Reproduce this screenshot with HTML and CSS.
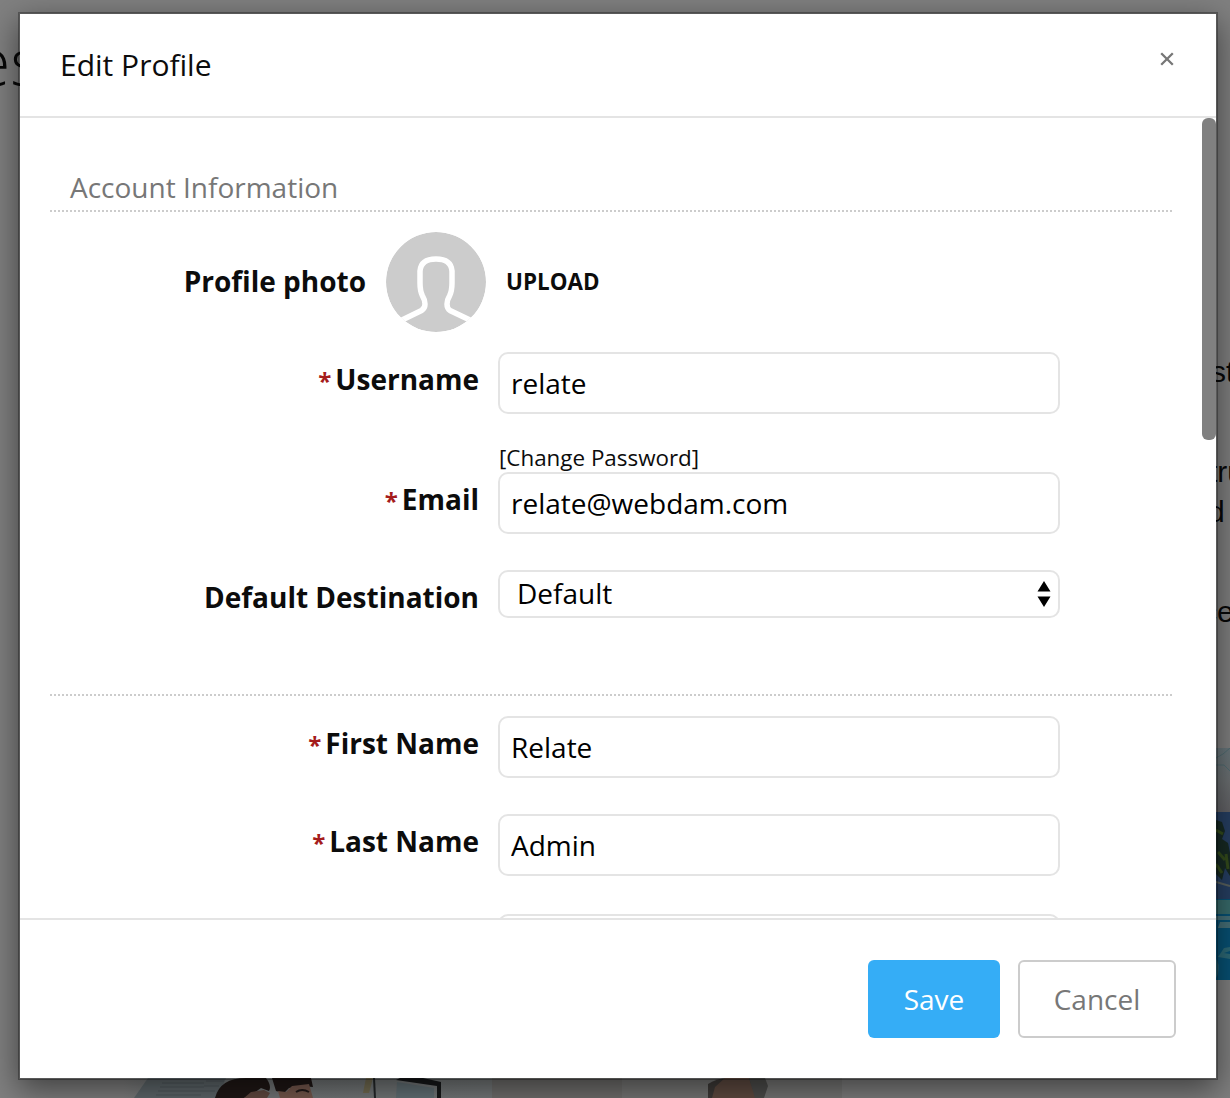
FILE: index.html
```html
<!DOCTYPE html>
<html lang="en">
<head>
<meta charset="utf-8">
<title>Edit Profile</title>
<link rel="stylesheet" href="styles.css">
</head>
<body>
<div class="backdrop" aria-hidden="true">
  <span class="page-title">es</span>
  <span class="page-text line-a">st</span>
  <span class="page-text line-b">tru</span>
  <span class="page-text line-c">d</span>
  <span class="page-text line-d">ce</span>
  <svg class="beach" width="14" height="232" viewBox="0 0 14 232">
    <defs><linearGradient id="sky" x1="0" y1="0" x2="0" y2="1"><stop offset="0" stop-color="#69777c"/><stop offset=".5" stop-color="#6c7072"/><stop offset="1" stop-color="#626165"/></linearGradient></defs>
    <rect width="14" height="66" fill="url(#sky)"/>
    <path d="M0 10l7-4 7-6M0 17h8l6 6" stroke="#526d73" fill="none"/>
    <rect y="64" width="14" height="90" fill="#263f62"/>
    <path d="M0 72l6 2 3 9-3 8 6 4 2 10v23l-5-8-3 12-6-6z" fill="#172a24"/>
    <path d="M2 104l7 8M0 116l6 9M10 106l2 15M0 82l7 4" stroke="#344c1c" stroke-width="3"/>
    <path d="M0 134l7 2 7 2" stroke="#5a625f" stroke-width="2" fill="none"/>
    <rect y="151" width="14" height="81" fill="#075174"/>
    <rect y="152" width="14" height="14" fill="#386b6b"/>
    <path d="M0 168h14v4H0zM4 174h10v6H2z" fill="#477078"/>
    <path d="M2 209l6-9 6-1v4l-6 2 6 1v5z" fill="#2d6976"/>
    <path d="M0 211q4 4 2 15l-2 4z" fill="#2a6475"/>
  </svg>
  <svg class="team" width="718" height="20" viewBox="0 0 718 20">
    <defs><linearGradient id="wall"><stop offset="0" stop-color="#808080"/><stop offset=".1" stop-color="#747879"/><stop offset="1" stop-color="#777b7c"/></linearGradient></defs>
    <rect width="368" height="20" fill="url(#wall)"/>
    <path d="M10 20L24 0h78l-8 20z" fill="#60696d"/>
    <path d="M38 5h42M36 9h44M34 13h44M32 17h45M82 3h18M80 8h15M78 13h13" stroke="#505a5e"/>
    <path d="M91 20q5-20 31-20h20q6 8 3 13l-8-3-10 7-7 3z" fill="#201816"/>
    <path d="M120 20l7-6 13-2 6 3-3 5z" fill="#654b42"/>
    <path d="M148 0h39l2 9-12-1-12 2-5 5-8-2z" fill="#1f1715"/>
    <path d="M154 13l8 1 6-6 17-2 4 14h-33z" fill="#795a4e"/>
    <path d="M172 14q6-4 13 0" stroke="#231a18" stroke-width="2" fill="none"/>
    <path d="M242 0h7l-4 15h-6z" fill="#766f54"/>
    <path d="M250 0l1 20" stroke="#25292b" stroke-width="2"/>
    <path d="M276 0h23l18 4v16h-4V8L272 2z" fill="#17191a"/>
    <path d="M273 4l37 6v10h-38z" fill="#657378"/>
    <rect x="368" width="350" height="20" fill="#787877"/>
    <rect x="368" width="130" height="20" fill="#72716f"/>
    <path d="M584 20V6q9-6 20-6h31l7 7-6 13z" fill="#3f3b39"/>
    <path d="M588 20l3-11 10-9h24l7 20z" fill="#614c42"/>
    <path d="M625 0h16l3 8-4 12h-9z" fill="#4f4f4d"/>
  </svg>
</div>
<main class="dialog" role="dialog" aria-label="Edit Profile">
  <header class="dialog-header">
    <h1>Edit Profile</h1>
    <button class="close" aria-label="Close"><svg width="14" height="14" viewBox="0 0 14 14"><path d="M1.200 1.200l11.600 11.600M12.800 1.200L1.200 12.800" stroke="#777" stroke-width="2.300"/></svg></button>
  </header>
  <div class="dialog-body">
    <form class="profile">
      <h2>Account Information</h2>
      <div class="photo-row">
        <span class="photo-label">Profile photo</span>
        <svg class="avatar" width="100" height="100" viewBox="0 0 100 100"><defs><clipPath id="disc"><circle cx="50" cy="50" r="50"/></clipPath></defs><g clip-path="url(#disc)"><circle cx="50" cy="50" r="50" fill="#ccc"/><path d="M14 89L35.500 78.500Q39 76.500 39 72Q39 68 36.500 64Q34 59 34 51V39Q35 27 50 27Q65 27 66 39V51Q66 59 63.500 64Q61 68 61 72Q61 76.500 64 78.500L86 89" fill="none" stroke="#fff" stroke-width="5.500"/></g></svg>
        <span class="upload">UPLOAD</span>
      </div>
      <div class="row">
        <label for="user"><span class="star">*</span>Username</label>
        <input id="user" value="relate">
      </div>
      <a class="change">[Change Password]</a>
      <div class="row">
        <label for="email"><span class="star">*</span>Email</label>
        <input id="email" value="relate@webdam.com">
      </div>
      <div class="row">
        <label>Default Destination</label>
        <div class="select"><span>Default</span><svg width="14" height="26" viewBox="0 0 14 26"><path d="M0.500 10.500L7 0l6.500 10.500zM0.500 15.500h13L7 26z"/></svg></div>
      </div>
      <hr>
      <div class="row">
        <label for="first"><span class="star">*</span>First Name</label>
        <input id="first" value="Relate">
      </div>
      <div class="row last-name">
        <label for="last"><span class="star">*</span>Last Name</label>
        <input id="last" value="Admin">
      </div>
      <div class="row">
        <label></label>
        <input aria-label="Company">
      </div>
    </form>
    <div class="scroll-thumb"></div>
  </div>
  <footer class="dialog-footer">
    <button class="btn save">Save</button>
    <button class="btn cancel">Cancel</button>
  </footer>
</main>
</body>
</html>
```
FILE: styles.css
```css
* { box-sizing: border-box; }
body {
  margin: 0;
  width: 1230px;
  height: 1098px;
  padding: 12px 12px 18px 18px;
  overflow: hidden;
  position: relative;
  background: #808080;
  color: #0c0c0c;
  font-family: "Open Sans", "Noto Sans", sans-serif;
}
h1, h2 { margin: 0; font-weight: 400; }
button, input { font-family: inherit; }

/* Dimmed page content around the dialog */
.backdrop { position: absolute; inset: 0; overflow: hidden; color: #080808; }
.backdrop > * { position: absolute; }
.page-title { right: 1189px; top: 15px; font-size: 66px; line-height: 90px; font-weight: 300; }
.page-text { font: 30px/40px "Liberation Sans", Arial, sans-serif; white-space: nowrap; }
.line-a { left: 1211px; top: 352px; }
.line-b { left: 1209px; top: 452px; }
.line-c { left: 1208px; top: 492px; }
.line-d { left: 1202px; top: 592px; }
.beach { left: 1216px; top: 748px; }
.team { left: 124px; top: 1078px; }

.dialog {
  position: relative;
  height: 1068px;
  display: flex;
  flex-direction: column;
  border: 2px solid rgba(0, 0, 0, .3);
  background: #fff;
  background-clip: padding-box;
  box-shadow: 0 10px 30px rgba(0, 0, 0, .5);
}
.dialog-header {
  height: 104px;
  flex: none;
  display: flex;
  justify-content: space-between;
  padding: 30px 42px 0 40px;
  border-bottom: 2px solid #e4e4e4;
}
h1 { font-size: 30px; line-height: 41px; }
.close { width: 14px; height: 14px; margin-top: 8px; padding: 0; border: 0; background: none; }
.close svg { display: block; }

.dialog-body { flex: none; height: 800px; display: flex; overflow: hidden; }
.profile { flex: 1; margin: 0 30px; padding-top: 50px; }
h2 {
  height: 44px;
  padding-left: 20px;
  font-size: 28px;
  line-height: 38px;
  color: #777;
  border-bottom: 2px dotted #ccc;
}
.photo-row { display: flex; align-items: center; gap: 20px; margin: 20px 0; }
.photo-label { width: 316px; padding-bottom: 2px; text-align: right; font-size: 28px; font-weight: 700; }
.upload { padding-bottom: 2px; font-size: 22.4px; font-weight: 700; }
.row { display: grid; grid-template-columns: 429px 562px; column-gap: 19px; align-items: start; margin-bottom: 36px; }
.row.last-name { margin-bottom: 38px; }
.row label { padding-top: 8px; text-align: right; font-size: 28px; line-height: 38px; font-weight: 700; }
.star { margin-right: 4px; font-size: 24px; color: #a51c1c; }
.row input, .select { width: 100%; border: 2px solid #e4e4e4; border-radius: 10px; background: #fff; color: #000; font-size: 28px; }
.row input { height: 62px; padding: 0 11px; }
.change { display: block; height: 28px; margin: -6px 0 0 449px; font-size: 22.4px; line-height: 28px; }
.select { height: 48px; display: flex; justify-content: space-between; align-items: center; padding: 0 7.500px 0 17px; line-height: 38px; }
.select span { padding-bottom: 2px; }
.profile hr { height: 2px; margin: 76px 0 20px; border: 0; border-bottom: 2px dotted #ccc; }
.scroll-thumb { flex: none; width: 14px; height: 322px; border-radius: 6px; background: #808080; }

.dialog-footer { flex: 1; display: flex; justify-content: flex-end; align-items: flex-start; gap: 18px; padding: 40px 40px 0; border-top: 2px solid #e4e4e4; }
.btn { height: 78px; border-radius: 6px; font-size: 28px; padding: 0; }
.save { width: 132px; border: 0; background: #35adf6; color: #fff; }
.cancel { width: 158px; border: 2px solid #ccc; background: #fff; color: #777; }
```
